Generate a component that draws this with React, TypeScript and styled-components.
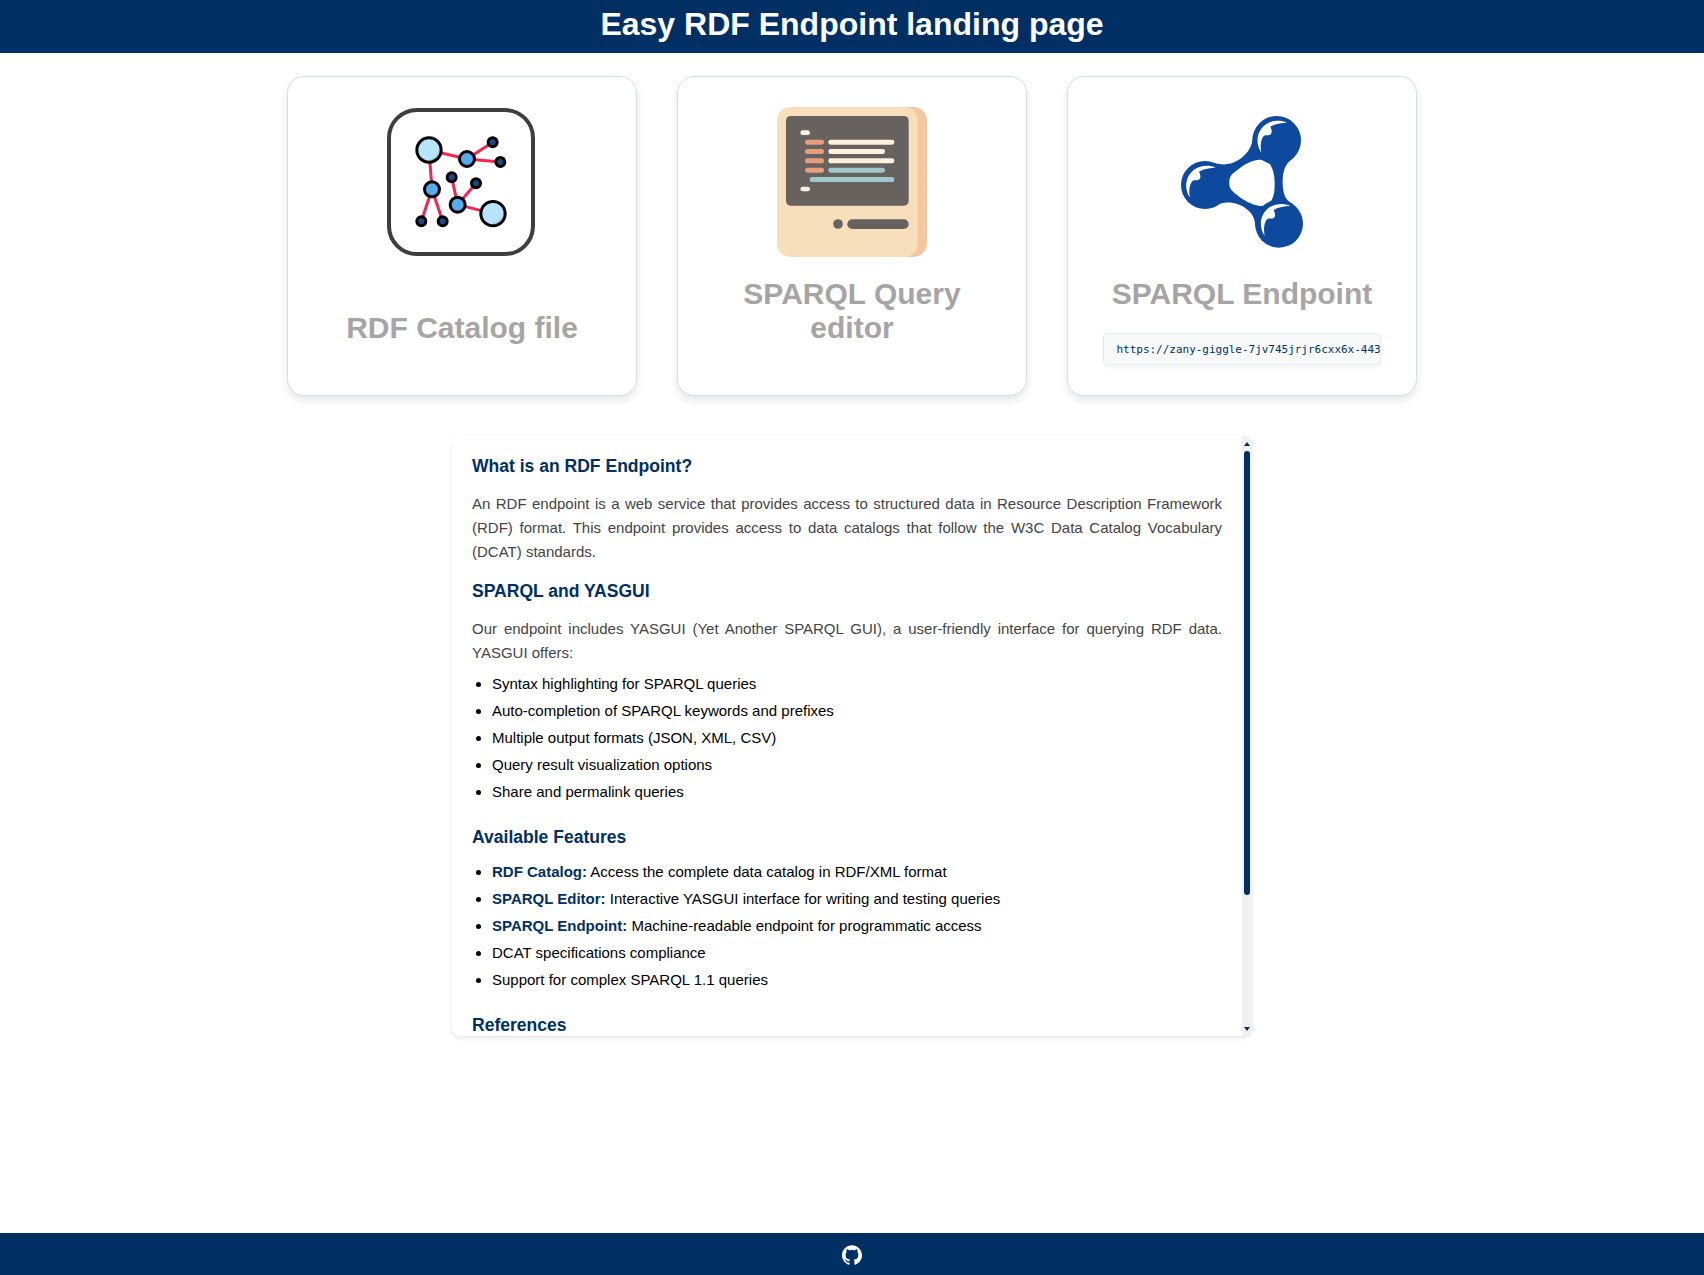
import React from "react";
import styled, { createGlobalStyle } from "styled-components";
import { SiGithub } from "react-icons/si";

const NAVY = "#003063";

const GlobalStyle = createGlobalStyle`
  * { box-sizing: border-box; }
  body { margin: 0; background: #fff; font-family: "Liberation Sans", Arial, sans-serif; }
`;

const Page = styled.div`
  display: flex;
  flex-direction: column;
  height: 100vh;
  overflow: hidden;
`;

const Header = styled.header`
  display: flex;
  justify-content: center;
  flex: none;
  height: 53px;
  padding-top: 6px;
  background: ${NAVY};
`;

const PageTitle = styled.h1`
  margin: 0;
  color: #fff;
  font-size: 32px;
  line-height: 36px;
  font-weight: bold;
`;

const Main = styled.main`
  display: flex;
  flex: 1;
  flex-direction: column;
  align-items: center;
  gap: 40px;
  padding-top: 23px;
`;

const Cards = styled.section`
  display: flex;
  gap: 40px;
`;

const Card = styled.a`
  display: flex;
  flex-direction: column;
  align-items: center;
  width: 350px;
  height: 320px;
  padding: 30px 35px;
  border: 1px solid #d8dfe8;
  border-radius: 17px;
  background: #fff;
  box-shadow: 0 4px 8px rgba(0, 0, 0, 0.1);
  text-decoration: none;
`;

const Art = styled.svg`
  display: block;
  flex: none;
  width: 150px;
  height: 150px;
`;

const CardTitle = styled.h2<{ $lowered?: boolean }>`
  margin: ${(p) => (p.$lowered ? 54 : 20)}px 0 22px;
  color: #a6a5a4;
  font-size: 30px;
  line-height: 34px;
  font-weight: bold;
  text-align: center;
`;

const EndpointUrl = styled.code`
  width: 278px;
  height: 32px;
  padding: 1px 0 0 12.5px;
  overflow: hidden;
  border: 1px solid #e9ecee;
  border-radius: 4px;
  background: #f8faf9;
  box-shadow: 0 2px 4px rgba(0, 0, 0, 0.05);
  color: ${NAVY};
  font-family: "DejaVu Sans Mono", monospace;
  font-size: 11px;
  letter-spacing: -0.02px;
  line-height: 30px;
  white-space: nowrap;
`;

const Panel = styled.section`
  display: flex;
  width: 800px;
  height: 600px;
  overflow: hidden;
  border-radius: 8px;
  background: #fff;
  box-shadow: 0 2px 4px rgba(0, 0, 0, 0.1);
`;

const PanelBody = styled.div`
  flex: 1;
  padding: 20px 20px 0;
  font-size: 15px;
`;

const Heading = styled.h3`
  margin: 0 0 16px;
  color: ${NAVY};
  font-size: 17.55px;
  line-height: 20px;
`;

const Paragraph = styled.p<{ $gap: number }>`
  margin: 0 0 ${(p) => p.$gap}px;
  color: #444;
  line-height: 24px;
  text-align: justify;
`;

const List = styled.ul`
  margin: 0 0 27px;
  padding-left: 20px;
  color: #000;
  line-height: 17px;
`;

const Item = styled.li`
  & + & { margin-top: 10px; }
`;

const Term = styled.strong`
  color: ${NAVY};
`;

const Scrollbar = styled.div`
  display: flex;
  flex-direction: column;
  align-items: center;
  justify-content: space-between;
  width: 10px;
  padding: 6px 0 5px;
  background: #f0f0f0;
`;

const Thumb = styled.div`
  width: 6px;
  height: 444px;
  margin: 5px 0 auto;
  border-radius: 3px;
  background: ${NAVY};
`;

const Arrow = styled.span<{ $down?: boolean }>`
  width: 0;
  height: 0;
  border: 3px solid transparent;
  ${(p) =>
    p.$down
      ? `border-top: 4px solid ${NAVY}; border-bottom: 0;`
      : `border-bottom: 4px solid ${NAVY}; border-top: 0;`}
`;

const Footer = styled.footer`
  display: flex;
  align-items: center;
  justify-content: center;
  flex: none;
  height: 42px;
  padding-top: 1px;
  background: ${NAVY};
  color: #fff;
  font-size: 20px;
`;

const LINKS = [
  [477, 270, 591, 297], [591, 297, 668, 247], [591, 297, 691, 306],
  [477, 270, 486, 388], [486, 388, 454, 484], [486, 388, 518, 484],
  [563, 434, 545, 352], [563, 434, 618, 370], [563, 434, 669, 461],
];
const LARGE = [[477, 270], [669, 461]];
const MEDIUM = [[591, 297], [486, 388], [563, 434]];
const SMALL = [[668, 247], [691, 306], [454, 484], [518, 484], [545, 352], [618, 370]];

const CatalogArt = () => (
  <Art viewBox="351 141 450 450">
    <rect x="357" y="150" width="432" height="432" rx="84" fill="#fff" stroke="#3e3e3e" strokeWidth="12" />
    <g stroke="#f6254f" strokeWidth="9">
      {LINKS.map(([x1, y1, x2, y2], i) => <line key={i} x1={x1} y1={y1} x2={x2} y2={y2} />)}
    </g>
    {LARGE.map(([x, y]) => (
      <g key={x}>
        <circle cx={x} cy={y} r="36.5" fill="#b7e4fd" />
        <path d={`M${x + 31} ${y - 8} Q${x + 27} ${y + 22} ${x - 4} ${y + 32} A33 33 0 0 0 ${x + 31} ${y - 8}`} fill="#a1d0e4" />
        <circle cx={x} cy={y} r="36.5" fill="none" stroke="#000" strokeWidth="9" />
      </g>
    ))}
    <g fill="#57abed" stroke="#000" strokeWidth="9">
      {MEDIUM.map(([x, y]) => <circle key={x} cx={x} cy={y} r="22.5" />)}
    </g>
    <g fill="#1b4a86" stroke="#000" strokeWidth="9">
      {SMALL.map(([x, y]) => <circle key={x} cx={x} cy={y} r="13.5" />)}
    </g>
  </Art>
);

const EditorArt = () => (
  <Art viewBox="321 141 450 450">
    <rect x="621" y="141" width="150" height="450" rx="40" fill="#f3c8a0" />
    <rect x="321" y="141" width="422" height="450" rx="40" fill="#f7dfbc" />
    <rect x="348" y="168" width="368" height="269" rx="14" fill="#67625e" />
    <g fill="#fff0df">
      <rect x="391" y="211" width="29" height="14" rx="7" />
      <rect x="391" y="380" width="29" height="14" rx="7" />
      <rect x="475" y="239" width="198" height="15" rx="7" />
      <rect x="475" y="267" width="170" height="15" rx="7" />
      <rect x="475" y="295" width="198" height="15" rx="7" />
    </g>
    <g fill="#e69e7c">
      <rect x="405" y="239" width="57" height="15" rx="7" />
      <rect x="405" y="267" width="57" height="15" rx="7" />
      <rect x="405" y="295" width="57" height="15" rx="7" />
      <rect x="405" y="323" width="57" height="15" rx="7" />
    </g>
    <g fill="#a0c8cb">
      <rect x="475" y="323" width="170" height="15" rx="7" />
      <rect x="419" y="351" width="254" height="15" rx="7" />
    </g>
    <g fill="#67625e">
      <circle cx="504" cy="492" r="14.5" />
      <rect x="532" y="478" width="184" height="29" rx="14.5" />
    </g>
  </Art>
);

/* Crescent highlight of a ball whose centre is the origin. */
const SHINE =
  "M31 -54 C12 -63 -14 -62 -34 -48 C-60 -29 -65 8 -46 36 C-50 14 -48 -4 -38 -15 C-29 -18 -23 -14 -18 -19 C-13 -24 -14 -31 -19 -42 C-4 -51 14 -54 31 -54 Z";

const RdfArt = () => (
  <Art viewBox="351 141 450 450">
    <g fill="#0d499d">
      <circle cx="680" cy="241" r="73" />
      <circle cx="465" cy="375" r="72" />
      <circle cx="687" cy="491" r="72" />
      <path
        fillRule="evenodd"
        d="M495 309 C550 328 604 280 607 240 L730 293 C702 312 698 340 698 365 C698 400 705 419 728 432 L615 490 C614 452 560 416 510 431 L465 374 Z
           M538 371 C537 351 543 344 558 333 C580 315 605 299 630 299 C644 300 655 307 661 314 C671 330 674 350 674 371 C674 392 672 408 665 420 C654 436 645 438 631 438 C607 435 580 421 560 404 C545 391 538 386 538 371 Z"
      />
    </g>
    <g fill="#fff">
      <path d={SHINE} transform="translate(680 242)" />
      <path d={SHINE} transform="translate(466 377)" />
      <path d={SHINE} transform="translate(690 492)" />
    </g>
  </Art>
);

const FEATURES = [
  { term: "RDF Catalog:", text: "Access the complete data catalog in RDF/XML format" },
  { term: "SPARQL Editor:", text: "Interactive YASGUI interface for writing and testing queries" },
  { term: "SPARQL Endpoint:", text: "Machine-readable endpoint for programmatic access" },
  { text: "DCAT specifications compliance" },
  { text: "Support for complex SPARQL 1.1 queries" },
];

const YASGUI = [
  "Syntax highlighting for SPARQL queries",
  "Auto-completion of SPARQL keywords and prefixes",
  "Multiple output formats (JSON, XML, CSV)",
  "Query result visualization options",
  "Share and permalink queries",
];

export default function App() {
  return (
    <Page>
      <GlobalStyle />
      <Header>
        <PageTitle>Easy RDF Endpoint landing page</PageTitle>
      </Header>
      <Main>
        <Cards>
          <Card>
            <CatalogArt />
            <CardTitle $lowered>RDF Catalog file</CardTitle>
          </Card>
          <Card>
            <EditorArt />
            <CardTitle>SPARQL Query editor</CardTitle>
          </Card>
          <Card>
            <RdfArt />
            <CardTitle>SPARQL Endpoint</CardTitle>
            <EndpointUrl>https://zany-giggle-7jv745jrjr6cxx6x-443</EndpointUrl>
          </Card>
        </Cards>
        <Panel>
          <PanelBody>
            <Heading>What is an RDF Endpoint?</Heading>
            <Paragraph $gap={17}>
              An RDF endpoint is a web service that provides access to structured data in Resource
              Description Framework (RDF) format. This endpoint provides access to data catalogs
              that follow the W3C Data Catalog Vocabulary (DCAT) standards.
            </Paragraph>
            <Heading>SPARQL and YASGUI</Heading>
            <Paragraph $gap={10}>
              Our endpoint includes YASGUI (Yet Another SPARQL GUI), a user-friendly interface for
              querying RDF data. YASGUI offers:
            </Paragraph>
            <List>
              {YASGUI.map((text) => <Item key={text}>{text}</Item>)}
            </List>
            <Heading>Available Features</Heading>
            <List>
              {FEATURES.map(({ term, text }) => (
                <Item key={text}>{term && <Term>{term}</Term>} {text}</Item>
              ))}
            </List>
            <Heading>References</Heading>
          </PanelBody>
          <Scrollbar>
            <Arrow />
            <Thumb />
            <Arrow $down />
          </Scrollbar>
        </Panel>
      </Main>
      <Footer>
        <SiGithub />
      </Footer>
    </Page>
  );
}
